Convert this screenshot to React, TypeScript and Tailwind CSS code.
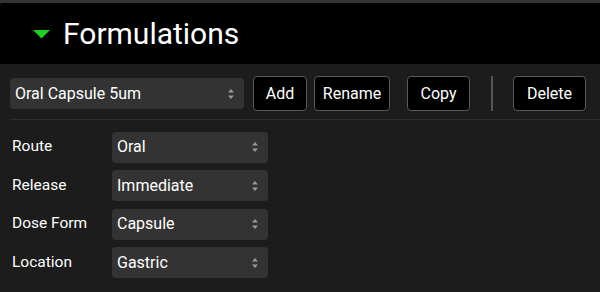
import React from "react";

function Updown() {
  return (
    <svg width="8" height="12" viewBox="0 0 8 12" className="shrink-0">
      <path d="M4 1 L7 4.5 L1 4.5 Z" fill="#9a9a9a" />
      <path d="M4 11 L7 7.5 L1 7.5 Z" fill="#9a9a9a" />
    </svg>
  );
}

function Select({ value, w }: { value: string; w: string }) {
  return (
    <div
      className={`${w} h-[31px] rounded-[4px] bg-[#333333] flex items-center justify-between pl-[5px] pr-[9px] text-[16px] text-white`}
    >
      <span>{value}</span>
      <Updown />
    </div>
  );
}

function Btn({ label, w, ml }: { label: string; w: string; ml: string }) {
  return (
    <div
      className={`${w} ${ml} h-[35px] rounded-[4px] border border-[#5a5a5a] bg-black flex items-center justify-center text-[16px] text-white`}
    >
      {label}
    </div>
  );
}

const rows: [string, string][] = [
  ["Route", "Oral"],
  ["Release", "Immediate"],
  ["Dose Form", "Capsule"],
  ["Location", "Gastric"],
];

export default function App() {
  return (
    <div
      className="w-[600px] h-[292px] bg-[#1c1c1c] overflow-hidden"
      style={{ fontFamily: "Roboto, 'Liberation Sans', sans-serif" }}
    >
      <div className="h-[3px] bg-[#333333]" />
      <div className="h-[61px] bg-black rounded-tl-[3px] flex items-center pl-[33px]">
        <svg width="18" height="9" viewBox="0 0 18 9" className="mr-[12px] mt-[1px]">
          <path d="M0 0 H17 L8.5 8.5 Z" fill="#1fd11f" />
        </svg>
        <span className="text-[30px] text-white leading-none">Formulations</span>
      </div>
      <div className="flex items-center pl-[10px] pt-[12px] pb-[8px]">
        <Select value="Oral Capsule 5um" w="w-[234px]" />
        <Btn label="Add" w="w-[54px]" ml="ml-[9px]" />
        <Btn label="Rename" w="w-[76px]" ml="ml-[7px]" />
        <Btn label="Copy" w="w-[63px]" ml="ml-[17px]" />
        <div className="w-[2px] h-[35px] bg-[#555555] ml-[21px]" />
        <Btn label="Delete" w="w-[73px]" ml="ml-[20px]" />
      </div>
      <div className="h-[1px] bg-[#2e2e2e] ml-[10px]" />
      <div className="flex flex-col gap-[8.5px] pt-[12px] pl-[12px]">
        {rows.map(([l, v]) => (
          <div key={l} className="flex items-center h-[30px]">
            <span className="w-[100px] text-[15.5px] text-white">{l}</span>
            <Select value={v} w="w-[156px]" />
          </div>
        ))}
      </div>
    </div>
  );
}
